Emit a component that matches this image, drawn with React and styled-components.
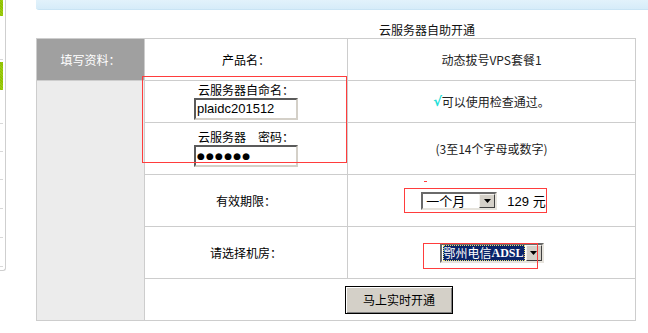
import React from "react";
import styled, { createGlobalStyle } from "styled-components";

const Global = createGlobalStyle`
  html, body { margin: 0; padding: 0; background: #fff; }
  body { font-family: "Noto Sans CJK SC", "Liberation Sans", sans-serif; font-size: 12px; color: #000; }
`;

const Page = styled.div`
  display: flex;
  width: 648px;
  height: 333px;
  overflow: hidden;
`;

const Sidebar = styled.div`
  width: 5px;
  height: 270px;
  border-right: 1px solid #cfcfcf;
  border-bottom: 1px solid #cfcfcf;
  border-bottom-right-radius: 3px;
  display: flex;
  flex-direction: column;
  flex: none;
`;

const SideItem = styled.div`
  position: relative;
  height: ${(p) => p.$h}px;
  flex: none;
  background: ${(p) =>
    p.$active
      ? "repeating-linear-gradient(45deg, #9ccc10 0 1px, #8fc000 1px 2px)"
      : "transparent"};
  width: ${(p) => (p.$active ? 3 : 5)}px;
  &::after {
    content: "";
    display: ${(p) => (p.$tick ? "block" : "none")};
    position: absolute;
    left: 0;
    bottom: 0;
    width: 3px;
    height: 1px;
    background: #d8d8d8;
  }
`;

const Main = styled.div`
  margin-left: 30px;
  display: flex;
  flex-direction: column;
  flex: 1;
`;

const Banner = styled.div`
  height: 9px;
  background: linear-gradient(180deg, #e2f2fb 0%, #d6ecf9 100%);
  border-bottom: 1px solid #c9e4f4;
  border-bottom-left-radius: 3px;
`;

const Title = styled.div`
  height: 28px;
  box-sizing: border-box;
  padding-left: 343px;
  padding-top: 12px;
  line-height: 16px;
  font-size: 12px;
  color: #111;
`;

const Grid = styled.div`
  position: relative;
  display: grid;
  grid-template-columns: 107px 202px 287px;
  grid-template-rows: 41px 41px 51px 51px 51px 41px;
  gap: 1px;
  padding: 1px;
  width: 600px;
  box-sizing: border-box;
  background: #cdcdcd;
`;

const HeadCell = styled.div`
  grid-column: 1;
  grid-row: 1;
  background: #a0a0a0;
  color: #fff;
  display: flex;
  align-items: center;
  justify-content: center;
  font-size: 12px;
`;

const SideFill = styled.div`
  grid-column: 1;
  grid-row: 2 / 7;
  background: #ececec;
`;

const Cell = styled.div`
  grid-column: ${(p) => p.$col};
  grid-row: ${(p) => p.$row};
  background: #fff;
  display: flex;
  align-items: center;
  justify-content: ${(p) => p.$justify || "center"};
  padding-left: ${(p) => p.$pl || 0}px;
  padding-right: ${(p) => p.$pr || 0}px;
  font-size: 12px;
  color: ${(p) => (p.$muted ? "#222" : "#000")};
`;

const FieldStack = styled.div`
  display: flex;
  flex-direction: column;
  align-items: center;
  gap: 1px;
`;

const Label = styled.div`
  line-height: 14px;
  font-size: 12px;
  color: #000;
  white-space: pre;
`;

const TextField = styled.div`
  width: 104px;
  height: 22px;
  box-sizing: border-box;
  border: 2px solid;
  border-color: #5a5a5a #d4d0c8 #d4d0c8 #5a5a5a;
  background: #fff;
  padding-left: 1px;
  font-family: "Liberation Sans", Arial, sans-serif;
  font-size: 13px;
  line-height: 18px;
  color: #000;
  display: flex;
  align-items: center;
`;

const Dots = styled.span`
  font-family: "DejaVu Sans", sans-serif;
  font-size: 9px;
  letter-spacing: 1.2px;
  line-height: 18px;
`;

const Check = styled.span`
  color: #22e0d8;
  font-family: "DejaVu Sans", sans-serif;
  font-size: 13px;
  font-weight: 700;
`;

const SelectBox = styled.div`
  width: ${(p) => p.$w}px;
  height: ${(p) => p.$h}px;
  box-sizing: border-box;
  border: 2px solid;
  border-color: #6a6a6a #e6e3dc #e6e3dc #6a6a6a;
  background: #fff;
  display: flex;
  align-items: stretch;
  flex: none;
`;

const SelectText = styled.div`
  flex: 1;
  display: flex;
  align-items: center;
  padding-left: ${(p) => (p.$focus ? 1 : 3)}px;
  margin: ${(p) => (p.$focus ? "0 1px 0 1px" : "0")};
  font-family: "Noto Sans CJK SC", sans-serif;
  font-size: ${(p) => (p.$focus ? 12 : 13)}px;
  line-height: 14px;
  color: ${(p) => (p.$focus ? "#fff" : "#000")};
  background: ${(p) => (p.$focus ? "#0a246a" : "transparent")};
  outline: ${(p) => (p.$focus ? "1px dotted #e8e070" : "none")};
  outline-offset: -1px;
  white-space: nowrap;
`;

const Latin = styled.span`
  font-family: "Liberation Serif", serif;
  font-weight: 700;
  font-size: 12px;
`;

const ArrowBtn = styled.div`
  width: 16px;
  flex: none;
  box-sizing: border-box;
  background: #d4d0c8;
  border: 1px solid;
  border-color: #f4f2ee #404040 #404040 #f4f2ee;
  display: flex;
  align-items: center;
  justify-content: center;
`;

const Price = styled.span`
  margin-left: 10px;
  font-family: "Liberation Sans", "Noto Sans CJK SC", sans-serif;
  font-size: 13px;
  color: #000;
`;

const Row = styled.div`
  display: flex;
  align-items: center;
`;

const SubmitButton = styled.button`
  width: 108px;
  height: 28px;
  box-sizing: border-box;
  border: 1px solid #000;
  background: #d4d0c8;
  box-shadow: inset 1px 1px 0 #ffffff, inset -1px -1px 0 #808080;
  font-family: "Noto Sans CJK SC", sans-serif;
  font-size: 12px;
  color: #000;
  padding: 0;
  cursor: pointer;
`;

const Mark = styled.div`
  position: absolute;
  left: ${(p) => p.$x}px;
  top: ${(p) => p.$y}px;
  width: ${(p) => p.$w}px;
  height: ${(p) => p.$h}px;
  box-sizing: border-box;
  border: ${(p) => (p.$fill ? "none" : "1px solid #ff3d3d")};
  background: ${(p) => (p.$fill ? "#ff3d3d" : "transparent")};
  pointer-events: none;
`;

const Arrow = () => (
  <svg width="7" height="4" viewBox="0 0 7 4">
    <path d="M0 0h7L3.5 4z" fill="#000" />
  </svg>
);

const sideItems = [
  { h: 16, active: true },
  { h: 44, tick: true },
  { h: 2 },
  { h: 28, active: true },
  { h: 34, tick: true },
  { h: 28, tick: true },
  { h: 28, tick: true },
  { h: 29, tick: true },
  { h: 29, tick: true },
  { h: 29, tick: true },
];

export default function App() {
  return (
    <Page>
      <Global />
      <Sidebar>
        {sideItems.map((it, i) => (
          <SideItem key={i} $h={it.h} $active={it.active} $tick={it.tick} />
        ))}
      </Sidebar>
      <Main>
        <Banner />
        <Title>云服务器自助开通</Title>
        <Grid>
          <HeadCell>填写资料：</HeadCell>
          <SideFill />

          <Cell $col={2} $row={1}>产品名：</Cell>
          <Cell $col={3} $row={1} $muted>动态拔号VPS套餐1</Cell>

          <Cell $col={2} $row={2}>
            <FieldStack>
              <Label>云服务器自命名：</Label>
              <TextField>plaidc201512</TextField>
            </FieldStack>
          </Cell>
          <Cell $col={3} $row={2} $muted>
            <Check>√</Check>可以使用检查通过。
          </Cell>

          <Cell $col={2} $row={3}>
            <FieldStack>
              <Label>云服务器　密码：</Label>
              <TextField>
                <Dots>●●●●●●</Dots>
              </TextField>
            </FieldStack>
          </Cell>
          <Cell $col={3} $row={3} $muted>(3至14个字母或数字)</Cell>

          <Cell $col={2} $row={4}>有效期限：</Cell>
          <Cell $col={3} $row={4} $pr={16}>
            <Row>
              <SelectBox $w={76} $h={18}>
                <SelectText>一个月</SelectText>
                <ArrowBtn>
                  <Arrow />
                </ArrowBtn>
              </SelectBox>
              <Price>129 元</Price>
            </Row>
          </Cell>

          <Cell $col={2} $row={5}>请选择机房：</Cell>
          <Cell $col={3} $row={5}>
            <SelectBox $w={104} $h={20}>
              <SelectText $focus>
                鄂州电信<Latin>ADSL</Latin>
              </SelectText>
              <ArrowBtn>
                <Arrow />
              </ArrowBtn>
            </SelectBox>
          </Cell>

          <Cell $col="2 / 4" $row={6} $justify="flex-start" $pl={200}>
            <SubmitButton>马上实时开通</SubmitButton>
          </Cell>

          <Mark $x={106} $y={38} $w={205} $h={87} />
          <Mark $x={368} $y={150} $w={143} $h={25} />
          <Mark $x={387} $y={205} $w={115} $h={26} />
          <Mark $x={388} $y={143} $w={3} $h={1} $fill />
        </Grid>
      </Main>
    </Page>
  );
}
